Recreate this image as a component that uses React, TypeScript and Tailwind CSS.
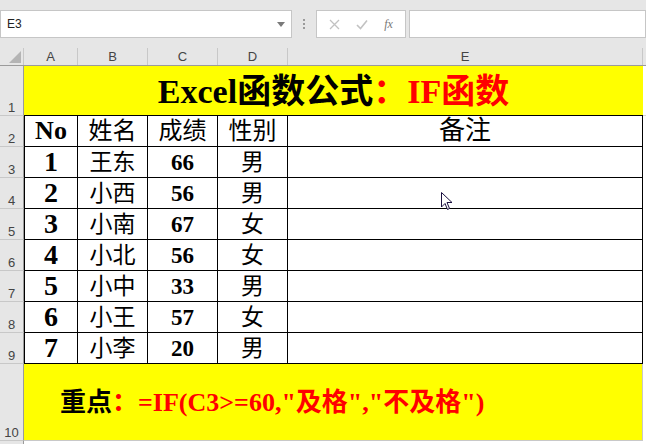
import React from "react";

const serif = { fontFamily: '"Liberation Serif", "Noto Sans CJK SC", serif' };
const ui = { fontFamily: '"Liberation Sans", Arial, sans-serif' };

const data: [number, string, number, string][] = [
  [1, "王东", 66, "男"],
  [2, "小西", 56, "男"],
  [3, "小南", 67, "女"],
  [4, "小北", 56, "女"],
  [5, "小中", 33, "男"],
  [6, "小王", 57, "女"],
  [7, "小李", 20, "男"],
];

function RowHead({ n, h }: { n: number; h: string }) {
  return (
    <div
      className={`w-[24px] shrink-0 ${h} bg-[#e6e6e6] border-r border-b border-r-[#9b9b9b] border-b-[#c8c8c8] flex items-end justify-center pb-[1px] text-[13px] leading-none text-[#444]`}
      style={ui}
    >
      {n}
    </div>
  );
}

export default function App() {
  return (
    <div className="w-[646px] h-[444px] overflow-hidden bg-white relative" style={ui}>
      {/* formula bar */}
      <div className="h-[48px] bg-[#e6e6e6] flex items-start pt-[10px]">
        <div className="w-[292px] h-[28px] bg-white border border-[#c6c6c6] flex items-center pl-[6px] pr-[6px]">
          <span className="text-[12px] text-[#222] flex-1">E3</span>
          <svg width="8" height="5" viewBox="0 0 8 5">
            <path d="M0 0 L8 0 L4 5 Z" fill="#7a7a7a" />
          </svg>
        </div>
        <div className="w-[24px] h-[28px] flex flex-col items-center justify-center gap-[2px]">
          <span className="w-[2px] h-[2px] bg-[#9a9a9a]" />
          <span className="w-[2px] h-[2px] bg-[#9a9a9a]" />
          <span className="w-[2px] h-[2px] bg-[#9a9a9a]" />
        </div>
        <div className="w-[90px] h-[28px] bg-white border border-[#c6c6c6] flex items-center justify-around px-[4px]">
          <svg width="11" height="11" viewBox="0 0 11 11">
            <path d="M1 1 L10 10 M10 1 L1 10" stroke="#c2c2c2" strokeWidth="1.3" />
          </svg>
          <svg width="12" height="11" viewBox="0 0 12 11">
            <path d="M1 6 L4.5 9.5 L11 1.5" stroke="#c2c2c2" strokeWidth="1.6" fill="none" />
          </svg>
          <span className="text-[12px] italic text-[#777]" style={serif}>
            fx
          </span>
        </div>
        <div className="ml-[3px] flex-1 h-[28px] bg-white border border-[#c6c6c6]" />
      </div>

      {/* column headers */}
      <div className="h-[18px] flex bg-[#e6e6e6] border-b border-[#9b9b9b] text-[13px] text-[#444] leading-none">
        <div className="w-[24px] shrink-0 border-r border-[#c8c8c8] relative">
          <svg className="absolute left-[9px] bottom-[2px]" width="12" height="12" viewBox="0 0 12 12">
            <path d="M12 0 L12 12 L0 12 Z" fill="#b4b4b4" />
          </svg>
        </div>
        {[
          ["A", "w-[54px]"],
          ["B", "w-[70px]"],
          ["C", "w-[70px]"],
          ["D", "w-[70px]"],
          ["E", "w-[355px]"],
        ].map(([l, w]) => (
          <div key={l} className={`${w} shrink-0 border-r border-[#c8c8c8] flex items-center justify-center`}>
            {l}
          </div>
        ))}
        <div className="flex-1" />
      </div>

      {/* row 1 title */}
      <div className="flex">
        <RowHead n={1} h="h-[50px]" />
        <div
          className="w-[619px] h-[50px] bg-[#ffff00] border-b border-black flex items-center justify-center pt-[3px] text-[34px] font-bold leading-none"
          style={serif}
        >
          <span className="text-black">Excel函数公式</span>
          <span className="text-[#ff0000]">：IF函数</span>
        </div>
        <div className="flex-1 border-b border-[#d4d4d4]" />
      </div>

      {/* row 2 headers */}
      <div className="flex">
        <RowHead n={2} h="h-[31px]" />
        <div className="flex h-[31px] border-b border-l border-black text-black leading-none" style={serif}>
          <div className="w-[53px] border-r border-black flex items-center justify-center text-[26px] font-bold">No</div>
          <div className="w-[70px] border-r border-black flex items-center justify-center text-[24px]">姓名</div>
          <div className="w-[70px] border-r border-black flex items-center justify-center text-[24px]">成绩</div>
          <div className="w-[70px] border-r border-black flex items-center justify-center text-[24px]">性别</div>
          <div className="w-[355px] border-r border-black flex items-center justify-center text-[26px]">备注</div>
        </div>
      </div>

      {data.map(([no, name, score, sex], i) => (
        <div key={no} className="flex">
          <RowHead n={i + 3} h="h-[31px]" />
          <div className="flex h-[31px] border-b border-l border-black text-black leading-none" style={serif}>
            <div className="w-[53px] border-r border-black flex items-center justify-center text-[28px] font-bold">{no}</div>
            <div className="w-[70px] border-r border-black flex items-center justify-center text-[23px]">{name}</div>
            <div className="w-[70px] border-r border-black flex items-center justify-center text-[23px] font-bold">{score}</div>
            <div className="w-[70px] border-r border-black flex items-center justify-center text-[23px]">{sex}</div>
            <div className="w-[355px] border-r border-black" />
          </div>
        </div>
      ))}

      {/* row 10 */}
      <div className="flex">
        <RowHead n={10} h="h-[77px]" />
        <div
          className="w-[619px] h-[77px] bg-[#ffff00] border-b border-r border-[#c8c8c8] flex items-center pl-[36px] pt-[2px] text-[26px] font-bold leading-none"
          style={serif}
        >
          <span className="text-black">重点</span>
          <span className="text-[#ff0000]">：=IF(C3&gt;=60,"及格","不及格")</span>
        </div>
      </div>
      <div className="flex">
        <div className="w-[24px] h-[4px] bg-[#e6e6e6] border-r border-[#9b9b9b]" />
      </div>

      {/* mouse pointer */}
      <svg className="absolute left-[441px] top-[192px]" width="13" height="20" viewBox="0 0 13 20">
        <path d="M0.5 0.5 L0.5 15 L4 11.5 L6.5 17.5 L8.5 16.5 L6 10.5 L11 10.5 Z" fill="white" stroke="#1a1040" strokeWidth="1" />
      </svg>
    </div>
  );
}
